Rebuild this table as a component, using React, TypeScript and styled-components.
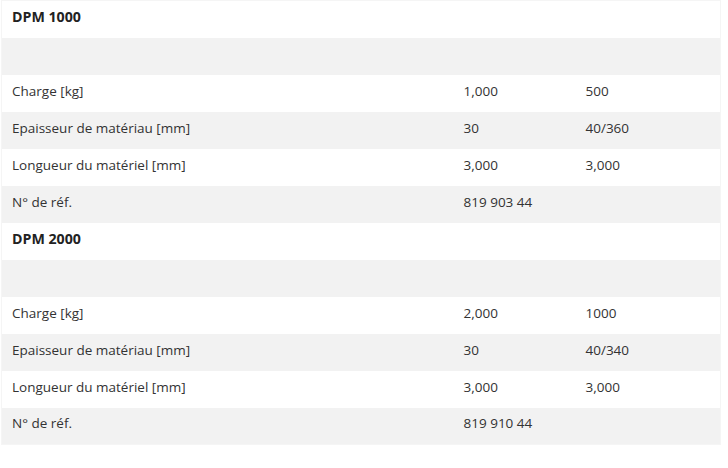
import React from "react";
import styled, { createGlobalStyle } from "styled-components";

const Global = createGlobalStyle`
  html, body { margin: 0; padding: 0; background: #ffffff; }
  body { font-family: "Open Sans", "Noto Sans", sans-serif; }
`;

const Wrap = styled.div`
  padding: 0 0 0 1px;
  width: 721px;
`;

const Table = styled.table`
  width: 720px;
  border-collapse: collapse;
  border: 1px solid #f5f5f5;
  table-layout: fixed;
  font-family: "Open Sans", "Noto Sans", sans-serif;
  font-size: 13.5px;
  color: #333333;
`;

const Row = styled.tr<{ $striped: boolean }>`
  height: 37px;
  background: ${(p) => (p.$striped ? "#f2f2f2" : "#ffffff")};
`;

const Cell = styled.td`
  padding: 0 0 5px 10px;
  vertical-align: middle;
  white-space: nowrap;
`;

const Title = styled.td`
  padding: 0 0 5px 10px;
  vertical-align: middle;
  font-weight: 700;
  font-size: 14.2px;
  color: #222222;
`;

type Spec = { name: string; rows: [string, string, string][] };

const specs: Spec[] = [
  {
    name: "DPM 1000",
    rows: [
      ["", "", ""],
      ["Charge [kg]", "1,000", "500"],
      ["Epaisseur de matériau [mm]", "30", "40/360"],
      ["Longueur du matériel [mm]", "3,000", "3,000"],
      ["N° de réf.", "819 903 44", ""],
    ],
  },
  {
    name: "DPM 2000",
    rows: [
      ["", "", ""],
      ["Charge [kg]", "2,000", "1000"],
      ["Epaisseur de matériau [mm]", "30", "40/340"],
      ["Longueur du matériel [mm]", "3,000", "3,000"],
      ["N° de réf.", "819 910 44", ""],
    ],
  },
];

export default function App() {
  let idx = 0;
  return (
    <Wrap>
      <Global />
      <Table>
        <colgroup>
          <col style={{ width: 452 }} />
          <col style={{ width: 122 }} />
          <col />
        </colgroup>
        <tbody>
          {specs.map((s) => {
            const out: React.ReactNode[] = [];
            out.push(
              <Row key={s.name} $striped={idx++ % 2 === 1}>
                <Title colSpan={3}>{s.name}</Title>
              </Row>
            );
            s.rows.forEach((r, i) => {
              out.push(
                <Row key={s.name + i} $striped={idx++ % 2 === 1}>
                  <Cell>{r[0]}</Cell>
                  <Cell>{r[1]}</Cell>
                  <Cell>{r[2]}</Cell>
                </Row>
              );
            });
            return out;
          })}
        </tbody>
      </Table>
    </Wrap>
  );
}
